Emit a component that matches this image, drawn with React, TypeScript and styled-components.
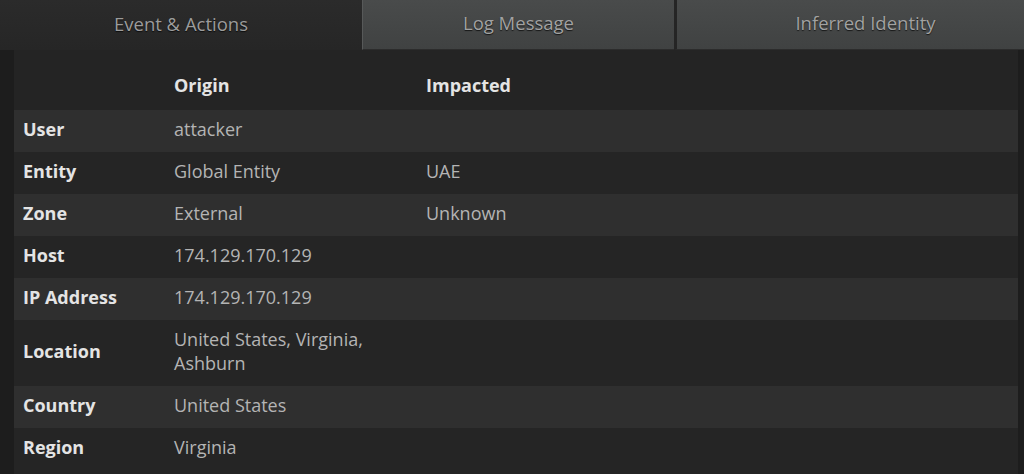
import styled, { createGlobalStyle } from "styled-components";

const GlobalStyle = createGlobalStyle`
  html, body {
    margin: 0;
    padding: 0;
    background: #1d1d1d;
  }
  body {
    font-family: "Open Sans", "DejaVu Sans", sans-serif;
  }
`;

type Row = {
  label: string;
  origin?: string;
  impacted?: string;
};

const rows: Row[] = [
  { label: "User", origin: "attacker" },
  { label: "Entity", origin: "Global Entity", impacted: "UAE" },
  { label: "Zone", origin: "External", impacted: "Unknown" },
  { label: "Host", origin: "174.129.170.129" },
  { label: "IP Address", origin: "174.129.170.129" },
  { label: "Location", origin: "United States, Virginia, Ashburn" },
  { label: "Country", origin: "United States" },
  { label: "Region", origin: "Virginia" },
];

const tabs = ["Event & Actions", "Log Message", "Inferred Identity"];

const App = () => {
  return (
    <>
      <GlobalStyle />
      <Page>
        <TabBar>
          {tabs.map((t, i) => (
            <Tab key={t} $active={i === 0} $index={i}>
              {t}
            </Tab>
          ))}
        </TabBar>
        <Content>
          <HeaderRow>
            <LabelCell />
            <HeadCell $wide>Origin</HeadCell>
            <HeadCell>Impacted</HeadCell>
          </HeaderRow>
          {rows.map((r, i) => (
            <DataRow key={r.label} $striped={i % 2 === 0}>
              <LabelCell>{r.label}</LabelCell>
              <ValueCell $wide>{r.origin}</ValueCell>
              <ValueCell>{r.impacted}</ValueCell>
            </DataRow>
          ))}
        </Content>
      </Page>
    </>
  );
};

export default App;

const Page = styled.div`
  width: 1024px;
  height: 474px;
  overflow: hidden;
  background: #1d1d1d;
`;

const TabBar = styled.div`
  display: flex;
  height: 50px;
  width: 1054px;
`;

const tabWidth = ["362px", "312px", "380px"];

const Tab = styled.div<{ $active: boolean; $index: number }>`
  flex: 0 0 ${(p) => tabWidth[p.$index]};
  display: flex;
  align-items: center;
  justify-content: center;
  padding-bottom: 4px;
  box-sizing: border-box;
  font-size: 18.5px;
  color: ${(p) => (p.$active ? "#9c9c9c" : "#a2a2a2")};
  text-shadow: 0 1px 1px rgba(0, 0, 0, 0.7);
  background: ${(p) =>
    p.$active
      ? "linear-gradient(#2b2b2b, #262626)"
      : "linear-gradient(#494b4b, #404242)"};
  border-left: ${(p) =>
    p.$index === 1 ? "1px solid #575959" : p.$index === 2 ? "3px solid #252525" : "none"};
  border-bottom: ${(p) => (p.$active ? "none" : "1px solid #2c2c2c")};
`;

const Content = styled.div`
  margin-left: 14px;
  margin-right: 6px;
  padding-top: 12px;
  background: #242424;
  height: 412px;
`;

const RowBase = styled.div`
  display: flex;
  align-items: center;
`;

const HeaderRow = styled(RowBase)`
  height: 48px;
  padding-bottom: 2px;
  box-sizing: border-box;
`;

const DataRow = styled(RowBase)<{ $striped: boolean }>`
  min-height: 42px;
  padding: 7px 0 11px;
  box-sizing: border-box;
  background: ${(p) => (p.$striped ? "#2f2f2f" : "#252525")};
`;

const LabelCell = styled.div`
  flex: 0 0 152px;
  box-sizing: border-box;
  padding-left: 9px;
  font-size: 18px;
  font-weight: 700;
  line-height: 24px;
  color: #e4e4e4;
`;

const HeadCell = styled.div<{ $wide?: boolean }>`
  flex: ${(p) => (p.$wide ? "0 0 252px" : "1")};
  box-sizing: border-box;
  padding-left: 8px;
  font-size: 18px;
  font-weight: 700;
  line-height: 24px;
  color: #e4e4e4;
`;

const ValueCell = styled.div<{ $wide?: boolean }>`
  flex: ${(p) => (p.$wide ? "0 0 252px" : "1")};
  box-sizing: border-box;
  padding-left: 8px;
  padding-right: 40px;
  font-size: 18px;
  line-height: 24px;
  color: #b4b4b4;
`;
